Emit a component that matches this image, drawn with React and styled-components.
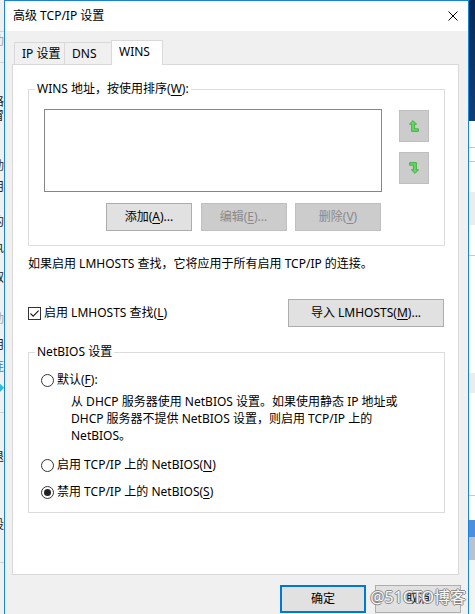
import React from 'react';
import styled, { createGlobalStyle } from 'styled-components';

const FONT = `"Noto Sans", "Noto Sans CJK SC", sans-serif`;

const Global = createGlobalStyle`
  html, body { margin: 0; padding: 0; }
  body {
    width: 475px; height: 614px; overflow: hidden;
    background: #f0f0f0;
    font-family: ${FONT};
    font-size: 12px; color: #000;
  }
  u { text-underline-offset: 2px; }
`;

const Screen = styled.div`
  display: flex;
  width: 475px;
  height: 614px;
  overflow: hidden;
`;

/* ---------- background windows peeking at the edges ---------- */
const LeftStrip = styled.div`
  width: 4px; flex: none;
  background: #f0f0f0;
  display: flex; flex-direction: column;
  overflow: hidden;
`;
const Spacer = styled.div`height: ${p => p.$h}px; flex: none;`;
const EdgeLine = styled.div`height: 1px; flex: none; background: #d2d2d2;`;
const Frag = styled.div`
  height: 14px; flex: none; width: 4px; overflow: hidden;
  white-space: nowrap; text-indent: -8px;
  font-size: 12px; line-height: 14px;
  color: ${p => p.$c};
`;

const RightStrip = styled.div`
  width: 6px; flex: none;
  display: flex; flex-direction: column;
  background: #ffffff;
`;
const RightBlock = styled.div`
  height: ${p => p.$h}px; flex: none;
  background: ${p => p.$bg};
`;

/* ---------- dialog ---------- */
const Dialog = styled.div`
  width: 465px; flex: none;
  box-sizing: border-box;
  border: 1px solid #1883d7;
  border-bottom: none;
  display: flex; flex-direction: column;
  background: #f0f0f0;
`;
const TitleBar = styled.div`
  height: 30px; flex: none;
  background: #fff;
  display: flex; align-items: center; justify-content: space-between;
  padding: 0 10px 0 8px;
`;
const Title = styled.span`font-size: 12px; line-height: 16px;`;

const Body = styled.div`
  flex: 1;
  padding: 9px 9px 0 7px;
  display: flex; flex-direction: column;
`;

const TabRow = styled.div`
  display: flex; align-items: flex-end;
  height: 24px; margin-left: 2px;
`;
const Tab = styled.div`
  box-sizing: border-box;
  width: ${p => p.$w}px;
  height: ${p => (p.$active ? 25 : 22)}px;
  margin-bottom: ${p => (p.$active ? -1 : 0)}px;
  margin-left: ${p => (p.$first ? 0 : -1)}px;
  padding: 0 0 ${p => (p.$active ? 2 : 0)}px 7px;
  border: 1px solid #d9d9d9;
  border-bottom: none;
  background: ${p => (p.$active ? '#fff' : '#f0f0f0')};
  display: flex; align-items: center;
  line-height: 16px;
  position: relative;
  z-index: ${p => (p.$active ? 2 : 1)};
`;

const Panel = styled.div`
  box-sizing: border-box;
  height: 511px;
  border: 1px solid #d9d9d9;
  background: #fff;
  padding: 24px 13px 0 15px;
  display: flex; flex-direction: column;
`;

const Group = styled.div`
  border: 1px solid #dcdcdc;
  margin-top: ${p => p.$mt || 0}px;
  padding-bottom: ${p => p.$pb}px;
  display: flex; flex-direction: column;
`;
const GroupLabel = styled.div`
  align-self: flex-start;
  margin: -9px 0 0 6px;
  padding: 0 2px;
  background: #fff;
  line-height: 16px;
`;

const ListRow = styled.div`
  display: flex;
  margin: 12px 0 0 15px;
`;
const ListBox = styled.div`
  box-sizing: border-box;
  width: 338px; height: 83px;
  border: 1px solid #868686;
  background: #fff;
`;
const ArrowCol = styled.div`
  margin-left: 17px;
  padding-top: 1px;
  display: flex; flex-direction: column; gap: 10px;
`;
const ArrowBtn = styled.div`
  box-sizing: border-box;
  width: 30px; height: 32px;
  background: #cccccc;
  border: 1px solid #bfbfbf;
  display: flex; align-items: center; justify-content: center;
`;

const ButtonRow = styled.div`
  display: flex; justify-content: flex-end; gap: 8.5px;
  width: 337px;
  margin: 11px 0 0 15px;
`;
const Button = styled.div`
  box-sizing: border-box;
  width: ${p => p.$w || 86}px; height: 28px;
  display: flex; align-items: center; justify-content: center;
  background: ${p => (p.$disabled ? '#cccccc' : '#e1e1e1')};
  border: ${p => (p.$primary ? '2px solid #0078d7' : p.$disabled ? '1px solid #bfbfbf' : '1px solid #adadad')};
  color: ${p => (p.$disabled ? '#8a8a8a' : '#000')};
  line-height: 16px;
  white-space: nowrap;
`;

const InfoText = styled.div`
  margin-top: 10px;
  line-height: 16px;
  white-space: nowrap;
`;

const OptionRow = styled.div`
  margin-top: 27px;
  height: 28px;
  display: flex; align-items: center; justify-content: space-between;
  padding-right: 1px;
`;
const CheckLabel = styled.label`
  display: flex; align-items: center; gap: 3px;
  line-height: 16px;
`;
const CheckBox = styled.span`
  box-sizing: border-box;
  width: 13px; height: 13px;
  border: 1px solid #333;
  background: #fff;
  display: flex; align-items: center; justify-content: center;
`;

const RadioRow = styled.div`
  display: flex; align-items: center; gap: 3px;
  margin-top: ${p => p.$mt}px;
  padding-left: 12px;
  line-height: 16px;
`;
const RadioCircle = styled.span`
  box-sizing: border-box;
  width: 13px; height: 13px;
  border: 1px solid #333;
  border-radius: 50%;
  background: #fff;
  display: flex; align-items: center; justify-content: center;
  &::after {
    content: '';
    display: ${p => (p.$on ? 'block' : 'none')};
    width: 7px; height: 7px; border-radius: 50%;
    background: #222;
  }
`;
const Desc = styled.div`
  margin-top: 5px;
  padding-left: 42px;
  line-height: 17px;
  white-space: nowrap;
`;

const ButtonBar = styled.div`
  position: relative;
  margin: 10px -2px 0 0;
  display: flex; justify-content: flex-end; gap: 9px;
`;
const Watermark = styled.div`
  position: absolute;
  right: -5px; top: 4px;
  font-family: ${FONT};
  font-size: 16px; line-height: 16px;
  color: #f6f6f6;
  white-space: nowrap;
  text-shadow: 1px 0 0 #8a8a8a, -1px 0 0 #8a8a8a, 0 1px 0 #8a8a8a, 0 -1px 0 #8a8a8a;
  pointer-events: none;
`;

/* ---------- icons ---------- */
const CloseIcon = () => (
  <svg width="10" height="10" viewBox="0 0 10 10">
    <path d="M0.5 0.5 L9.5 9.5 M9.5 0.5 L0.5 9.5" stroke="#000" strokeWidth="1" fill="none" />
  </svg>
);

const HookArrow = ({ down }) => (
  <svg width="10" height="12" viewBox="0 0 10 12">
    <path
      d="M4 0.6 L7.6 4.2 L5.6 4.2 L5.6 8.8 L9.4 8.8 L9.4 11.4 L2.6 11.4 L2.6 4.2 L0.4 4.2 Z"
      fill="#62d862"
      stroke="#3aa53a"
      strokeWidth="0.8"
      strokeLinejoin="miter"
      transform={down ? 'rotate(180 5 6)' : undefined}
    />
  </svg>
);

const CheckMark = () => (
  <svg width="11" height="11" viewBox="0 0 11 11">
    <path d="M1.5 5.5 L4.2 8.2 L9.6 2.6" stroke="#222" strokeWidth="1.2" fill="none" />
  </svg>
);

/* ---------- edge data ---------- */
const leftMarks = [
  { y: 31, line: true },
  { y: 41, ch: '功', c: '#a5a5a5' },
  { y: 62, line: true },
  { y: 102, ch: '格', c: '#222' },
  { y: 116, ch: '冒', c: '#222' },
  { y: 166, ch: '动', c: '#444' },
  { y: 187, ch: '用', c: '#222' },
  { y: 222, ch: '的', c: '#222' },
  { y: 248, ch: '执', c: '#222' },
  { y: 278, ch: '取', c: '#222' },
  { y: 319, ch: '动', c: '#aaa' },
  { y: 345, ch: '用', c: '#222' },
  { y: 367, ch: '连', c: '#4a7fb0' },
  { y: 389, ch: '◆', c: '#3ab7d8' },
  { y: 412, line: true },
  { y: 457, ch: '退', c: '#222' },
  { y: 525, ch: '设', c: '#222' },
  { y: 562, line: true },
];

function buildLeft() {
  const out = [];
  let cur = 0;
  leftMarks.forEach((m, i) => {
    if (m.line) {
      out.push(<Spacer key={'s' + i} $h={m.y - cur} />);
      out.push(<EdgeLine key={'l' + i} />);
      cur = m.y + 1;
    } else {
      const top = m.y - 7;
      out.push(<Spacer key={'s' + i} $h={top - cur} />);
      out.push(<Frag key={'f' + i} $c={m.c}>{m.ch}</Frag>);
      cur = top + 14;
    }
  });
  return out;
}

const rightBlocks = [
  { h: 121, bg: 'linear-gradient(#062a55, #123f77)' },
  { h: 26, bg: '#ffffff' },
  { h: 1, bg: '#c6c6c6' },
  { h: 13, bg: '#ffffff' },
  { h: 1, bg: '#c6c6c6' },
  { h: 30, bg: '#ffffff' },
  { h: 33, bg: '#ececec' },
  { h: 30, bg: '#ffffff' },
  { h: 1, bg: '#c6c6c6' },
  { h: 117, bg: '#ffffff' },
  { h: 20, bg: '#ececec' },
  { h: 102, bg: '#ffffff' },
  { h: 1, bg: '#c6c6c6' },
  { h: 24, bg: '#ffffff' },
  { h: 17, bg: '#4d8fdc' },
  { h: 23, bg: '#b9c3cf' },
  { h: 54, bg: '#f3f3f3' },
];

export default function App() {
  return (
    <>
      <Global />
      <Screen>
        <LeftStrip>{buildLeft()}</LeftStrip>

        <Dialog>
          <TitleBar>
            <Title>高级 TCP/IP 设置</Title>
            <CloseIcon />
          </TitleBar>

          <Body>
            <TabRow>
              <Tab $w={51} $first>IP 设置</Tab>
              <Tab $w={48}>DNS</Tab>
              <Tab $w={52} $active>WINS</Tab>
            </TabRow>

            <Panel>
              <Group $pb={14}>
                <GroupLabel>WINS 地址，按使用排序(<u>W</u>):</GroupLabel>
                <ListRow>
                  <ListBox />
                  <ArrowCol>
                    <ArrowBtn><HookArrow /></ArrowBtn>
                    <ArrowBtn><HookArrow down /></ArrowBtn>
                  </ArrowCol>
                </ListRow>
                <ButtonRow>
                  <Button><span>添加(<u>A</u>)...</span></Button>
                  <Button $disabled><span>编辑(<u>E</u>)...</span></Button>
                  <Button $disabled><span>删除(<u>V</u>)</span></Button>
                </ButtonRow>
              </Group>

              <InfoText>如果启用 LMHOSTS 查找，它将应用于所有启用 TCP/IP 的连接。</InfoText>

              <OptionRow>
                <CheckLabel>
                  <CheckBox><CheckMark /></CheckBox>
                  <span>启用 LMHOSTS 查找(<u>L</u>)</span>
                </CheckLabel>
                <Button $w={156}><span>导入 LMHOSTS(<u>M</u>)...</span></Button>
              </OptionRow>

              <Group $mt={25} $pb={12}>
                <GroupLabel>NetBIOS 设置</GroupLabel>
                <RadioRow $mt={12}>
                  <RadioCircle />
                  <span>默认(<u>F</u>):</span>
                </RadioRow>
                <Desc>
                  从 DHCP 服务器使用 NetBIOS 设置。如果使用静态 IP 地址或<br />
                  DHCP 服务器不提供 NetBIOS 设置，则启用 TCP/IP 上的<br />
                  NetBIOS。
                </Desc>
                <RadioRow $mt={13}>
                  <RadioCircle />
                  <span>启用 TCP/IP 上的 NetBIOS(<u>N</u>)</span>
                </RadioRow>
                <RadioRow $mt={11}>
                  <RadioCircle $on />
                  <span>禁用 TCP/IP 上的 NetBIOS(<u>S</u>)</span>
                </RadioRow>
              </Group>
            </Panel>

            <ButtonBar>
              <Button $primary>确定</Button>
              <Button>取消</Button>
              <Watermark>@51CTO博客</Watermark>
            </ButtonBar>
          </Body>
        </Dialog>

        <RightStrip>
          {rightBlocks.map((b, i) => (
            <RightBlock key={i} $h={b.h} $bg={b.bg} />
          ))}
        </RightStrip>
      </Screen>
    </>
  );
}
